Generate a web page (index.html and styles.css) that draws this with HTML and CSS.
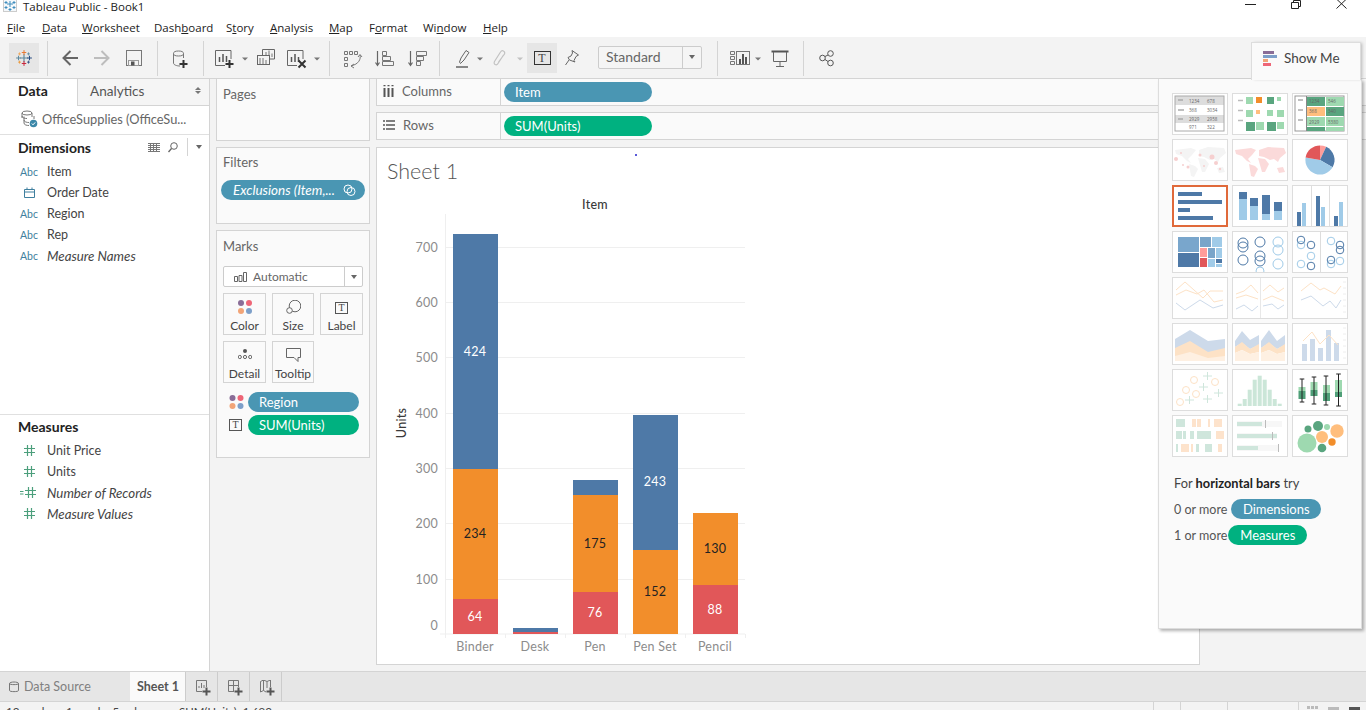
FILE: index.html
```html
<!DOCTYPE html>
<html lang="en">
<head>
<meta charset="utf-8">
<title>Tableau Public - Book1</title>
<link rel="stylesheet" href="styles.css">
</head>
<body>
<svg class="defs" width="0" height="0" aria-hidden="true">
  <defs>
    <g id="world">
      <path d="M3 11 L19 9 L24 11 L20 16 L16 20 L19 24 L15 22 L10 17 L4 15Z"/>
      <path d="M17 25 L23 27 L26 30 L22 38 L19 37Z"/>
      <path d="M27 11 L36 8 L52 9 L54 14 L48 19 L46 23 L42 20 L38 21 L32 18 L27 17Z"/>
      <path d="M26 19 L33 20 L37 25 L33 33 L30 33 L28 26Z"/>
      <path d="M45 29 L51 28 L53 33 L47 34Z"/>
    </g>
    <g id="hash">
      <path d="M4.5 0V11M8.5 0V11M1 3.5H12M1 7.5H12" fill="none" stroke="#4c9f7c" stroke-width="1.2"/>
    </g>
    <g id="dots">
      <circle cx="3" cy="3" r="3" fill="#8a6d97"/><circle cx="11" cy="3" r="3" fill="#ee6677"/>
      <circle cx="3" cy="11" r="3" fill="#f2a477"/><circle cx="11" cy="11" r="3" fill="#7d9fc9"/>
    </g>
  </defs>
</svg>

<header class="titlebar">
  <svg class="app-icon" width="14" height="12" viewBox="0 0 14 12">
    <rect x="0.5" y="-2" width="13" height="13.500" fill="#f4f8fb" stroke="#ccc"/>
    <path d="M7 1V7M4 4H10M3 1V4M1.500 2.500H4.500M11 1V4M9.500 2.500H12.500M3 6V9M1.500 7.500H4.500M11 6V9M9.500 7.500H12.500M7 8V11M5.500 9.500H8.500" stroke="#3f8dbd" stroke-width="1"/>
  </svg>
  <span class="app-title">Tableau Public - Book1</span>
  <div class="winctl">
    <svg width="11" height="8" viewBox="0 0 11 8"><path d="M0 4.500H11" stroke="#222"/></svg>
    <svg width="10" height="9" viewBox="0 0 10 9"><path d="M.5 2.500H7.500V8.500H.5ZM2.500 2.500V.5H9.500V6.500H7.500" fill="none" stroke="#222"/></svg>
    <svg width="11" height="9" viewBox="0 0 11 9"><path d="M.5 -1L10.500 8.500M10.500 -1L.5 8.500" stroke="#222"/></svg>
  </div>
</header>

<nav class="menubar">
  <span class="m-file"><u>F</u>ile</span>
  <span class="m-data"><u>D</u>ata</span>
  <span class="m-work"><u>W</u>orksheet</span>
  <span class="m-dash">Dash<u>b</u>oard</span>
  <span class="m-story">S<u>t</u>ory</span>
  <span class="m-anal"><u>A</u>nalysis</span>
  <span class="m-map"><u>M</u>ap</span>
  <span class="m-form">F<u>o</u>rmat</span>
  <span class="m-win">Wi<u>n</u>dow</span>
  <span class="m-help"><u>H</u>elp</span>
</nav>

<div class="toolbar">
  <div class="tg g0">
    <div class="tool-on">
      <svg width="18" height="18" viewBox="0 0 24 24" fill="none">
        <path d="M12 7V17M7 12H17" stroke="#5b879b" stroke-width="1.500"/>
        <path d="M12 1.500V8M9 4.700H15" stroke="#e8762d" stroke-width="1.300"/>
        <path d="M12 16V22.500M9 19.300H15" stroke="#c72035" stroke-width="1.300"/>
        <path d="M1.500 12H8M4.700 9V15" stroke="#5b879b" stroke-width="1.300"/>
        <path d="M16 12H22.500M19.300 9V15" stroke="#1f457e" stroke-width="1.300"/>
        <path d="M6 4.500V8.500M4 6.500H8" stroke="#f2a04c" stroke-width="1"/>
        <path d="M18 4.500V8.500M16 6.500H20" stroke="#59879b" stroke-width="1"/>
        <path d="M6 15.500V19.500M4 17.500H8" stroke="#eb9129" stroke-width="1"/>
        <path d="M18 15.500V19.500M16 17.500H20" stroke="#1f457e" stroke-width="1"/>
      </svg>
    </div>
  </div>
  <i class="sep"></i>
  <div class="tg g1">
    <svg width="16" height="24" viewBox="0 0 16 24" fill="none"><path d="M16 12H1.500M8.500 5L1.500 12L8.500 19" stroke="#666" stroke-width="2"/></svg>
    <svg width="16" height="24" viewBox="0 0 16 24" fill="none"><path d="M0 12H14.500M7.500 5L14.500 12L7.500 19" stroke="#bdbdbd" stroke-width="2"/></svg>
    <svg width="16" height="24" viewBox="0 0 16 24" fill="none"><rect x=".5" y="4.500" width="15" height="15" stroke="#777"/><rect x="2.500" y="14.500" width="10" height="5" stroke="#999"/><rect x="5" y="15.500" width="3.500" height="4" fill="#555"/></svg>
  </div>
  <i class="sep"></i>
  <div class="tg g2">
    <svg width="18" height="24" viewBox="0 0 18 24" fill="none"><path d="M2.500 7.500V17C2.500 19 6 20 9 20M12.500 7.500V12" stroke="#777"/><ellipse cx="7.500" cy="7.500" rx="5" ry="2.500" stroke="#777"/><path d="M12.500 14V22M8.500 18H16.500" stroke="#333" stroke-width="2"/></svg>
  </div>
  <i class="sep"></i>
  <div class="tg g3">
    <svg width="33" height="24" viewBox="0 0 33 24" fill="none"><path d="M10 19.500H.5V4.500H16V13" stroke="#666"/><path d="M4.500 16V11M8 16V8M11.500 16V10" stroke="#555" stroke-width="1.500"/><path d="M14.500 14V22M10.500 18H18.500" stroke="#333" stroke-width="2"/><path d="M27 11.500H33L30 14.500Z" fill="#777"/></svg>
    <svg width="21" height="24" viewBox="0 0 21 24" fill="none"><path d="M5.500 9V3.500H17.500V13H12.500" stroke="#666"/><rect x=".5" y="9.500" width="12" height="9" fill="#f3f3f3" stroke="#666"/><path d="M9 6V9M12 4.500V9M15 7.500V11M3 12V18M6 12V18M9 14V18" stroke="#777"/></svg>
    <svg width="33" height="24" viewBox="0 0 33 24" fill="none"><path d="M10 19.500H.5V4.500H16V13" stroke="#666"/><path d="M4.500 16V11M8 16V8M11.500 16V11" stroke="#555" stroke-width="1.500"/><path d="M11.500 14.500L18.500 21.500M18.500 14.500L11.500 21.500" stroke="#333" stroke-width="2"/><path d="M27 11.500H33L30 14.500Z" fill="#777"/></svg>
  </div>
  <i class="sep"></i>
  <div class="tg g4">
    <svg width="20" height="24" viewBox="0 0 20 24" fill="none"><path d="M1.500 5.500h3v3h-3zM6.500 5.500h3v3h-3zM11.500 5.500h3v3h-3zM1.500 11.500h3v3h-3zM1.500 17.500h3v3h-3z" stroke="#777"/><path d="M17 9C18 13 16 18 8 20M8 20L11 18M8 20L11 22M15 11L17 8.500L19 11" stroke="#777"/></svg>
    <svg width="20" height="24" viewBox="0 0 20 24" fill="none"><path d="M2.500 5V19M.5 16.500L2.500 19.500L4.500 16.500" stroke="#666" stroke-width="1.200"/><path d="M7.500 5.500h4v4h-4zM7.500 10.500h8v4h-8zM7.500 15.500h11v4h-11z" stroke="#777"/></svg>
    <svg width="20" height="24" viewBox="0 0 20 24" fill="none"><path d="M3.500 5V19M1.500 16.500L3.500 19.500L5.500 16.500" stroke="#666" stroke-width="1.200"/><path d="M9.500 5.500h10v4h-10zM9.500 10.500h7v4h-7zM9.500 15.500h4v4h-4z" stroke="#777"/></svg>
  </div>
  <i class="sep"></i>
  <div class="tg g5">
    <svg width="37" height="24" viewBox="0 0 37 24" fill="none"><path d="M3.500 16L5 12L10 4.500L13 6.500L8 14L4.500 17.500Z" stroke="#666"/><rect x="0" y="20" width="12" height="2" fill="#888"/><path d="M21 11.500H27L24 14.500Z" fill="#777"/></svg>
    <svg width="34" height="24" viewBox="0 0 34 24" fill="none"><path d="M10.500 9L5 17.500C3.500 20 0 18.500 1.500 15.500L7.500 6C9 3.500 12.500 5 11.500 8L5.500 16" stroke="#c2c2c2" stroke-width="1.200"/><path d="M24 11.500H30L27 14.500Z" fill="#c2c2c2"/></svg>
    <div class="tool-on"><span class="t-box t-lg">T</span></div>
    <svg width="41" height="24" viewBox="0 0 41 24" fill="none"><path d="M15 4.500L21.500 9L19 10.500L17 14.500L18 16L12.500 14L11 11.500L14 10L15.500 7ZM12 14L8.500 19" stroke="#666"/></svg>
    <div class="std"><span class="std-text">Standard</span><span class="std-btn"><i class="caret"></i></span></div>
  </div>
  <i class="sep"></i>
  <div class="tg g6">
    <svg width="41" height="24" viewBox="0 0 41 24" fill="none"><path d="M.5 5.500h4v3h-4zM.5 10.500h4v3h-4zM.5 15.500h4v3h-4z" stroke="#777"/><rect x="6.500" y="5.500" width="13" height="13" stroke="#777"/><path d="M10 18V13M13 18V8M16 18V11" stroke="#555" stroke-width="2"/><path d="M25 11.500H31L28 14.500Z" fill="#777"/></svg>
    <svg width="20" height="24" viewBox="0 0 20 24" fill="none"><path d="M.5 5.500H17.500" stroke="#555" stroke-width="2"/><path d="M2.500 6V15.500H15.500V6M9 16V20M5 20.500H13" stroke="#666"/></svg>
  </div>
  <i class="sep"></i>
  <div class="tg g7">
    <svg width="16" height="24" viewBox="0 0 16 24" fill="none"><circle cx="11.500" cy="7.500" r="2.800" stroke="#555"/><circle cx="3.500" cy="12" r="2.800" stroke="#555"/><circle cx="11.500" cy="17" r="2.800" stroke="#555"/><path d="M6 10.500L9 9M6 13.500L9 15.500" stroke="#555"/></svg>
  </div>
</div>

<main class="main">
  <aside class="datapane">
    <div class="tabs">
      <div class="tab-data">Data</div>
      <div class="tab-analytics"><span>Analytics</span><span class="updown"><i></i><i></i></span></div>
    </div>
    <div class="conn">
      <svg width="18" height="18" viewBox="0 0 18 18" fill="none"><ellipse cx="7" cy="3" rx="5" ry="2" stroke="#777"/><path d="M2 3V8M12 3V7M2 6C2 8 5 8.500 7 8.500M4 6.500V13C4 15 7 15.500 9 15.500M4 10C4 12 7 12.500 9 12.500M14 6V9" stroke="#777"/><circle cx="13.500" cy="13.500" r="3.800" fill="#3c87a8"/><path d="M11.800 13.500L13 14.800L15.200 12.400" stroke="#fff"/></svg>
      <span>OfficeSupplies (OfficeSu...</span>
    </div>
    <div class="dims">
      <div class="sec-head">
        <span class="sec-title">Dimensions</span>
        <span class="sec-tools">
          <svg width="12" height="9" viewBox="0 0 12 9"><path d="M0 .5H12M0 2.500H12M0 4.500H12M0 6.500H12M0 8.500H12M2.500 0V9M5.500 0V9M8.500 0V9" stroke="#777" stroke-width="1"/></svg>
          <svg width="10" height="11" viewBox="0 0 10 11" fill="none"><circle cx="6" cy="4" r="3.300" stroke="#666"/><path d="M3.500 6.500L.5 10" stroke="#666" stroke-width="1.300"/></svg>
          <i class="vline"></i>
          <i class="caret"></i>
        </span>
      </div>
      <ul class="fields">
        <li><span class="abc">Abc</span>Item</li>
        <li><span class="fi"><svg width="11" height="11" viewBox="0 0 11 11" fill="none"><path d="M.5 2.500H10.500V10.500H.5ZM.5 5H10.500M3 .5V2.500M8 .5V2.500" stroke="#3f7f9e"/></svg></span>Order Date</li>
        <li><span class="abc">Abc</span>Region</li>
        <li><span class="abc">Abc</span>Rep</li>
        <li class="calc"><span class="abc">Abc</span>Measure Names</li>
      </ul>
    </div>
    <div class="meas">
      <div class="sec-head"><span class="sec-title">Measures</span></div>
      <ul class="fields">
        <li><span class="fi"><svg width="13" height="11" viewBox="0 0 13 11"><use href="#hash"/></svg></span>Unit Price</li>
        <li><span class="fi"><svg width="13" height="11" viewBox="0 0 13 11"><use href="#hash"/></svg></span>Units</li>
        <li class="calc"><span class="fi fi-eq"><svg width="17" height="11" viewBox="-4 0 17 11"><path d="M-4 4.500H-.5M-4 7H-.5" stroke="#4c9f7c"/><use href="#hash"/></svg></span>Number of Records</li>
        <li class="calc"><span class="fi"><svg width="13" height="11" viewBox="0 0 13 11"><use href="#hash"/></svg></span>Measure Values</li>
      </ul>
    </div>
  </aside>

  <section class="cards">
    <div class="card card-pages"><h3>Pages</h3></div>
    <div class="card card-filters">
      <h3>Filters</h3>
      <div class="pill pill-blue pill-filter"><em>Exclusions (Item,...</em>
        <svg width="13" height="12" viewBox="0 0 13 12" fill="none"><circle cx="5" cy="5" r="4" stroke="#fff"/><circle cx="8" cy="7.500" r="4" stroke="#fff"/></svg>
      </div>
    </div>
    <div class="card card-marks">
      <h3>Marks</h3>
      <div class="marktype">
        <svg width="13" height="10" viewBox="0 0 13 10" fill="none"><path d="M.5 4.500h3v5h-3zM5 3.500h3v6h-3zM9.500 .5h3v9h-3z" stroke="#666"/></svg>
        <span class="mt-name">Automatic</span>
        <span class="mt-btn"><i class="caret"></i></span>
      </div>
      <div class="markgrid">
        <div class="mbtn"><svg width="14" height="14" viewBox="0 0 14 14"><use href="#dots"/></svg><span>Color</span></div>
        <div class="mbtn"><svg width="15" height="14" viewBox="0 0 15 14" fill="none"><circle cx="9" cy="6" r="5.800" stroke="#666"/><circle cx="3.500" cy="10.500" r="2.800" fill="#fafafa" stroke="#666"/></svg><span>Size</span></div>
        <div class="mbtn"><span class="t-box">T</span><span>Label</span></div>
        <div class="mbtn"><svg width="14" height="14" viewBox="0 0 14 14" fill="none"><circle cx="7" cy="3" r="2" fill="#555"/><circle cx="1.800" cy="9" r="1.600" stroke="#666"/><circle cx="7" cy="9" r="1.600" stroke="#666"/><circle cx="12.200" cy="9" r="1.600" stroke="#666"/></svg><span>Detail</span></div>
        <div class="mbtn"><svg width="15" height="14" viewBox="0 0 15 14" fill="none"><path d="M.5 .5H14.500V9.500H12V13.500L8 9.500H.5Z" stroke="#666"/></svg><span>Tooltip</span></div>
      </div>
      <div class="encs">
        <svg width="15" height="14" viewBox="0 0 14 14"><use href="#dots"/></svg>
        <div class="pill pill-blue pill-enc">Region</div>
        <span class="t-box">T</span>
        <div class="pill pill-green pill-enc">SUM(Units)</div>
      </div>
    </div>
  </section>

  <section class="work">
    <div class="shelf shelf-cols">
      <div class="shelf-label">
        <svg width="11" height="12" viewBox="0 0 11 12"><path d="M1.500 3V12M5.500 3V12M9.500 3V12" stroke="#555" stroke-width="2"/><path d="M.5 .5H2.500M4.500 .5H6.500M8.500 .5H10.500" stroke="#555" stroke-width="1.500"/></svg>
        <span>Columns</span>
      </div>
      <div class="pill pill-blue pill-shelf">Item</div>
    </div>
    <div class="shelf shelf-rows">
      <div class="shelf-label">
        <svg width="12" height="10" viewBox="0 0 12 10"><path d="M3 1H12M3 5H12M3 9H12" stroke="#555" stroke-width="1.500"/><path d="M0 1H2M0 5H2M0 9H2" stroke="#555" stroke-width="1.500"/></svg>
        <span>Rows</span>
      </div>
      <div class="pill pill-green pill-shelf">SUM(Units)</div>
    </div>
    <div class="sheet">
      <i class="blue-dot"></i>
      <h1 class="sheet-title">Sheet 1</h1>
      <svg class="chart" width="822" height="474" viewBox="377 190 822 474">
        <g class="grid">
          <path d="M445.500 214V638M440 634H745"/>
          <path d="M445 247.500H745M445 302.500H745M445 357.500H745M445 413.500H745M445 468.500H745M445 523.500H745M445 579.500H745"/>
          <path d="M505.500 634V638M565.500 634V638M625.500 634V638M685.500 634V638M745.500 634V638"/>
        </g>
        <rect class="b" x="453" y="234" width="45" height="235"/>
        <rect class="o" x="453" y="469" width="45" height="130"/>
        <rect class="r" x="453" y="599" width="45" height="35"/>
        <rect class="b" x="513" y="628" width="45" height="4"/>
        <rect class="r" x="513" y="632" width="45" height="2"/>
        <rect class="b" x="573" y="480" width="45" height="15"/>
        <rect class="o" x="573" y="495" width="45" height="97"/>
        <rect class="r" x="573" y="592" width="45" height="42"/>
        <rect class="b" x="633" y="415" width="45" height="135"/>
        <rect class="o" x="633" y="550" width="45" height="84"/>
        <rect class="o" x="693" y="513" width="45" height="72"/>
        <rect class="r" x="693" y="585" width="45" height="49"/>
        <g class="lab-w">
          <text x="475" y="356">424</text><text x="475" y="621">64</text>
          <text x="595" y="617">76</text><text x="655" y="486">243</text><text x="715" y="614">88</text>
        </g>
        <g class="lab-k">
          <text x="475" y="538">234</text><text x="595" y="548">175</text>
          <text x="655" y="596">152</text><text x="715" y="553">130</text>
        </g>
        <g class="yax">
          <text x="438" y="252">700</text><text x="438" y="307">600</text><text x="438" y="362">500</text>
          <text x="438" y="418">400</text><text x="438" y="473">300</text><text x="438" y="528">200</text>
          <text x="438" y="584">100</text><text x="438" y="630">0</text>
        </g>
        <g class="xax">
          <text x="475" y="651">Binder</text><text x="535" y="651">Desk</text><text x="595" y="651">Pen</text>
          <text x="655" y="651">Pen Set</text><text x="715" y="651">Pencil</text>
        </g>
        <text class="ax-title" x="595" y="209">Item</text>
        <text class="ax-title" transform="translate(406 423) rotate(-90)">Units</text>
      </svg>
    </div>
  </section>
</main>

<footer class="tabbar">
  <div class="t-source">
    <svg width="10" height="12" viewBox="0 0 10 12" fill="none"><path d="M.5 2.500V9.500C.5 11 9.500 11 9.500 9.500V2.500C9.500 .5 .5 .5 .5 2.500ZM.5 2.500C.5 4 9.500 4 9.500 2.500" stroke="#777"/></svg>
    <span>Data Source</span>
  </div>
  <div class="t-sheet">Sheet 1</div>
  <div class="t-add">
    <svg width="15" height="16" viewBox="0 0 15 16" fill="none"><path d="M6 11.500H.5V.5H10.500V7" stroke="#777"/><path d="M3 8V6M5.500 8V3M8 8V5" stroke="#777"/><path d="M10.500 7.500V15.500M6.500 11.500H14.500" stroke="#555" stroke-width="2"/></svg>
  </div>
  <div class="t-add">
    <svg width="15" height="16" viewBox="0 0 15 16" fill="none"><path d="M6 11.500H.5V.5H10.500V7M.5 5.500H10.500M5.500 .5V11.500" stroke="#777"/><path d="M10.500 7.500V15.500M6.500 11.500H14.500" stroke="#555" stroke-width="2"/></svg>
  </div>
  <div class="t-add">
    <svg width="15" height="16" viewBox="0 0 15 16" fill="none"><path d="M6 12L3.500 10.500L.5 12V1.500L3.500 0L7 1.500L10.500 0V7M3.500 0V10.500M7 1.500V8" stroke="#777"/><path d="M10.500 7.500V15.500M6.500 11.500H14.500" stroke="#555" stroke-width="2"/></svg>
  </div>
</footer>
<div class="status">
  <span class="st st-marks">13 marks</span>
  <span class="st st-rows">1 row by 5 columns</span>
  <span class="st st-sum">SUM(Units): 1,693</span>
  <span class="st-right">
    <i class="st-cell c1"></i><i class="st-cell c2"></i><i class="st-cell c3"></i>
    <i class="st-cell c4"><b class="sq"></b><b class="sq"></b><b class="sq"></b></i>
    <b class="sv"></b><b class="sv sv-on"></b>
  </span>
</div>

<aside class="showme">
  <div class="sm-tab">
    <svg width="15" height="15" viewBox="0 0 15 15"><rect width="11" height="3" fill="#8a6d97"/><rect y="4" width="14" height="3" fill="#7d9fc9"/><rect y="8" width="5" height="3" fill="#f2a477"/><rect y="12" width="8" height="3" fill="#ee6677"/></svg>
    <span>Show Me</span>
  </div>
  <div class="sm-grid">
    <!-- text table -->
    <svg class="th" viewBox="1 1 54 40"><path d="M3 3H52V12H3ZM3 22H52V30H3Z" fill="#ddd"/><rect x="3" y="3" width="49" height="35" fill="none" stroke="#aaa"/><path d="M6 7H11M6 17H12M6 26H11" stroke="#aaa" stroke-width="1.500"/><g class="tiny"><text x="17" y="10">1234</text><text x="35" y="10">678</text><text x="17" y="19">368</text><text x="35" y="19">3034</text><text x="17" y="28">2929</text><text x="35" y="28">2958</text><text x="17" y="36">971</text><text x="35" y="36">322</text></g></svg>
    <!-- heat map -->
    <svg class="th" viewBox="1 1 54 40"><path d="M6 7.500H11M6 17.500H11M6 27.500H11" stroke="#bbb" stroke-width="1.500"/><rect x="14" y="4" width="7" height="7" fill="#9ed9b0"/><rect x="24" y="4" width="6" height="6" fill="#f28e2b"/><rect x="35" y="4" width="7" height="7" fill="#59a57f"/><rect x="45" y="4" width="4" height="4" fill="#9ed9b0"/><rect x="14" y="17" width="7" height="7" fill="#9ed9b0"/><rect x="24" y="17" width="4" height="4" fill="#ffbe7d"/><rect x="35" y="17" width="6" height="6" fill="#9ed9b0"/><rect x="45" y="17" width="7" height="7" fill="#9ed9b0"/><rect x="14" y="29" width="9" height="9" fill="#59a57f"/><rect x="24" y="29" width="8" height="8" fill="#9ed9b0"/><rect x="35" y="29" width="9" height="9" fill="#59a57f"/><rect x="45" y="29" width="7" height="7" fill="#9ed9b0"/></svg>
    <!-- highlight table -->
    <svg class="th" viewBox="1 1 54 40"><rect x="3" y="3" width="49" height="35" fill="#fff" stroke="#999"/><path d="M14.500 3V38" stroke="#888"/><path d="M6 7H11M6 17H11M6 27H11" stroke="#aaa" stroke-width="1.500"/><rect x="15" y="4" width="18" height="9" fill="#59a57f"/><rect x="34" y="4" width="18" height="9" fill="#9ed9b0"/><rect x="15" y="14" width="18" height="9" fill="#ffbe7d"/><rect x="34" y="14" width="18" height="9" fill="#59a57f"/><rect x="15" y="24" width="18" height="9" fill="#9ed9b0"/><rect x="34" y="24" width="18" height="9" fill="#9ed9b0"/><rect x="15" y="34" width="18" height="4" fill="#59a57f"/><rect x="34" y="34" width="18" height="4" fill="#9ed9b0"/><g class="tiny"><text x="17" y="10">1234</text><text x="36" y="10">546</text><text x="17" y="20">368</text><text x="36" y="20">340</text><text x="17" y="31">2929</text><text x="36" y="31">5380</text></g></svg>
    <!-- symbol map -->
    <svg class="th" viewBox="1 1 54 40"><use href="#world" fill="#f4f4f4"/><g fill="#f6cfcf"><circle cx="4" cy="20" r="2"/><circle cx="9" cy="14" r="1"/><circle cx="11" cy="26" r="1"/><circle cx="16" cy="28" r="1.500"/><circle cx="28" cy="16" r="1.500"/><circle cx="32" cy="27" r="1"/><circle cx="40" cy="18" r="2.500"/><circle cx="44" cy="24" r="2"/><circle cx="48" cy="30" r="1.200"/></g></svg>
    <!-- filled map -->
    <svg class="th" viewBox="1 1 54 40"><use href="#world" fill="#fbdada"/></svg>
    <!-- pie -->
    <svg class="th" viewBox="1 1 54 40"><path d="M28 21V6.400A14.600 14.600 0 0 1 34.200 7.800Z" fill="#ff9d9a"/><path d="M28 21L34.200 7.800A14.600 14.600 0 0 1 40.600 28.300Z" fill="#4e79a7"/><path d="M28 21L40.600 28.300A14.600 14.600 0 0 1 13.600 18.500Z" fill="#a0cbe8"/><path d="M28 21L13.600 18.500A14.600 14.600 0 0 1 28 6.400Z" fill="#e15759"/></svg>
    <!-- horizontal bars (selected) -->
    <svg class="th th-sel" viewBox="2 2 52 38"><g fill="#4e79a7"><rect x="6" y="7" width="24" height="4"/><rect x="6" y="15" width="44" height="4"/><rect x="6" y="23" width="12" height="4"/><rect x="6" y="31" width="35" height="4"/></g></svg>
    <!-- stacked bars -->
    <svg class="th" viewBox="1 1 54 40"><g fill="#a0cbe8"><rect x="7" y="14" width="8" height="21"/><rect x="18" y="21" width="8" height="14"/><rect x="30" y="29" width="8" height="6"/><rect x="42" y="26" width="8" height="9"/></g><g fill="#4e79a7"><rect x="7" y="7" width="8" height="7"/><rect x="18" y="13" width="8" height="8"/><rect x="30" y="10" width="8" height="19"/><rect x="42" y="17" width="8" height="9"/></g></svg>
    <!-- side by side -->
    <svg class="th" viewBox="1 1 54 40"><path d="M19.500 0V42M37.500 0V42" stroke="#ddd"/><g fill="#4e79a7"><rect x="5" y="27" width="4" height="14"/><rect x="24" y="11" width="4" height="30"/><rect x="42" y="31" width="4" height="10"/></g><g fill="#a0cbe8"><rect x="10" y="18" width="4" height="23"/><rect x="29" y="22" width="4" height="19"/><rect x="47" y="17" width="4" height="24"/></g></svg>
    <!-- treemap -->
    <svg class="th" viewBox="1 1 54 40"><rect x="6" y="6" width="21" height="15" fill="#79a6cc"/><rect x="6" y="22" width="21" height="14" fill="#4e79a7"/><rect x="28" y="6" width="11" height="10" fill="#7aa5c9"/><rect x="40" y="6" width="10" height="10" fill="#a0cbe8"/><rect x="28" y="17" width="7" height="9" fill="#ff9d9a"/><rect x="28" y="27" width="7" height="9" fill="#e15759"/><rect x="36" y="17" width="7" height="10" fill="#7aa5c9"/><rect x="44" y="17" width="6" height="10" fill="#a0cbe8"/><rect x="36" y="28" width="7" height="8" fill="#a0cbe8"/><rect x="44" y="28" width="6" height="4" fill="#4e79a7"/><rect x="44" y="33" width="6" height="3" fill="#a0cbe8"/></svg>
    <!-- circles -->
    <svg class="th" viewBox="1 1 54 40" fill="none" stroke-width="1"><g stroke="#4e79a7"><circle cx="11" cy="12" r="5"/><circle cx="11" cy="16" r="5"/><circle cx="28" cy="11" r="5"/><circle cx="11" cy="29" r="5"/><circle cx="28" cy="25" r="5"/><circle cx="28" cy="30" r="5"/></g><g stroke="#a0cbe8"><circle cx="46" cy="11" r="5"/><circle cx="46" cy="19" r="5"/><circle cx="46" cy="33" r="5"/><circle cx="28" cy="40" r="4"/></g></svg>
    <!-- side by side circles -->
    <svg class="th" viewBox="1 1 54 40" fill="none"><path d="M28.500 0V42" stroke="#ddd"/><g stroke="#a0cbe8"><circle cx="9" cy="14" r="3.800"/><circle cx="19" cy="25" r="3.800"/><circle cx="9" cy="33" r="3.800"/><circle cx="39" cy="10" r="3.800"/><circle cx="39" cy="33" r="3.800"/><circle cx="48" cy="30" r="3.800"/></g><g stroke="#4e79a7"><circle cx="9" cy="9" r="3.800"/><circle cx="19" cy="14" r="3.800"/><circle cx="19" cy="35" r="3.800"/><circle cx="48" cy="14" r="3.800"/><circle cx="48" cy="19" r="3.800"/><circle cx="39" cy="29" r="3.800"/></g></svg>
    <!-- lines -->
    <svg class="th" viewBox="1 1 54 40" fill="none"><polyline points="4,13 13,5 31,21 38,14 51,14" stroke="#fde2c6"/><polyline points="4,18 14,13 25,17 32,13 42,25 51,23" stroke="#fde2c6"/><polyline points="4,26 13,33 28,23 41,31 51,28" stroke="#cddaea"/></svg>
    <svg class="th" viewBox="1 1 54 40" fill="none"><path d="M28.500 0V42" stroke="#e8e8e8"/><polyline points="4,17 12,14 19,8 26,16" stroke="#fde2c6"/><polyline points="4,21 14,18 26,22" stroke="#fde2c6"/><polyline points="4,32 12,28 20,34 26,29" stroke="#cddaea"/><polyline points="31,14 38,8 46,15 52,11" stroke="#fde2c6"/><polyline points="31,23 40,19 52,24" stroke="#fde2c6"/><polyline points="31,29 40,27 46,32 52,28" stroke="#cddaea"/></svg>
    <svg class="th" viewBox="1 1 54 40" fill="none"><polyline points="9,14 19,6 28,13 32,11 43,17 49,9" stroke="#fde2c6"/><polyline points="9,23 19,19 31,29 38,24 44,31 49,23" stroke="#cddaea"/><path d="M51 5H54M51 11H54M51 17H54M51 23H54M51 29H54M51 35H54" stroke="#eee"/></svg>
    <!-- areas -->
    <svg class="th" viewBox="1 1 54 40"><path d="M3 16L18 7L36 18L53 16V26L36 30L18 19L3 26Z" fill="#cddaea"/><path d="M3 25L18 18L36 29L53 25V34L36 36L18 30L3 34Z" fill="#fde2c6"/><path d="M3 33L18 29L36 35L53 33V38H3Z" fill="#fef0e2"/></svg>
    <svg class="th" viewBox="1 1 54 40"><path d="M3 18L10 8L18 17L27 12V22L18 26L10 20L3 24Z" fill="#cddaea"/><path d="M29 18L37 7L45 18L53 12V22L45 26L37 20L29 25Z" fill="#cddaea"/><path d="M3 24L10 19L18 26L27 21V29L18 31L10 27L3 30Z" fill="#fde2c6"/><path d="M29 25L37 19L45 26L53 21V29L45 31L37 27L29 30Z" fill="#fde2c6"/><path d="M3 30L10 27L18 31L27 29V38H3Z" fill="#fef0e2"/><path d="M29 30L37 27L45 31L53 29V38H29Z" fill="#fef0e2"/></svg>
    <svg class="th" viewBox="1 1 54 40" fill="none"><g fill="#cddaea"><rect x="10" y="21" width="5" height="17"/><rect x="18" y="16" width="5" height="22"/><rect x="26" y="25" width="5" height="13"/><rect x="34" y="7" width="5" height="31"/><rect x="42" y="20" width="5" height="18"/></g><polyline points="11,18 20,9 28,21 37,12 46,22" stroke="#fde2c6"/><path d="M51 5H54M51 11H54M51 17H54M51 23H54M51 29H54M51 35H54" stroke="#eee"/></svg>
    <!-- scatter -->
    <svg class="th" viewBox="1 1 54 40" fill="none"><g stroke="#fde2c6"><circle cx="8" cy="33" r="3.500"/><circle cx="14" cy="21" r="3.500"/><circle cx="22" cy="11" r="3.500"/><circle cx="24" cy="25" r="3.500"/><circle cx="43" cy="13" r="3.500"/></g><path d="M13 31H22M17.500 27V35M27 18H36M31.500 14V22M31 7H40M35.500 3V11M31 30H40M35.500 26V34M42 24H51M46.500 20V28" stroke="#cfe6dc"/></svg>
    <!-- histogram -->
    <svg class="th" viewBox="1 1 54 40"><g fill="#cbe6d8"><rect x="5.700" y="34.700" width="4" height="2.300"/><rect x="10.700" y="30" width="4" height="7"/><rect x="15.700" y="20.700" width="4" height="16.300"/><rect x="20.700" y="10.700" width="4" height="26.300"/><rect x="25.700" y="6.700" width="4" height="30.300"/><rect x="30.700" y="10.700" width="4" height="26.300"/><rect x="35.700" y="20.700" width="4" height="16.300"/><rect x="40.700" y="30" width="4" height="7"/><rect x="45.700" y="34.700" width="4" height="2.300"/></g></svg>
    <!-- box plot -->
    <svg class="th" viewBox="1 1 54 40"><g fill="#9ed9b0"><rect x="6.500" y="18" width="7" height="4"/><rect x="18.500" y="13" width="7" height="8"/><rect x="31" y="16" width="7" height="8"/><rect x="43" y="11" width="7" height="12"/></g><g fill="#4f9f78"><rect x="6.500" y="22" width="7" height="8"/><rect x="18.500" y="21" width="7" height="6"/><rect x="31" y="24" width="7" height="8"/><rect x="43" y="23" width="7" height="5"/></g><path d="M10 10V33M7.700 10H12.300M7.700 33H12.300M22 8V35M19.700 8H24.300M19.700 35H24.300M34 7V36M31.700 7H36.300M31.700 36H36.300M46.500 5V37M44.200 5H48.800M44.200 37H48.800" stroke="#222" fill="none"/></svg>
    <!-- gantt -->
    <svg class="th" viewBox="1 1 54 40"><g fill="#cfe6dc"><rect x="4" y="4" width="9" height="8"/><rect x="4" y="16" width="6" height="8"/><rect x="11" y="16" width="3" height="8"/><rect x="18" y="16" width="4" height="8"/><rect x="25" y="16" width="14" height="8"/><rect x="4" y="29" width="2" height="8"/><rect x="24" y="29" width="3" height="8"/><rect x="33" y="29" width="7" height="8"/></g><g fill="#fde3cc"><rect x="20" y="4" width="4" height="8"/><rect x="25" y="4" width="4" height="8"/><rect x="36" y="4" width="2" height="8"/><rect x="42" y="4" width="8" height="8"/><rect x="44" y="16" width="8" height="8"/><rect x="9" y="29" width="8" height="8"/><rect x="19" y="29" width="2" height="8"/><rect x="46" y="29" width="4" height="8"/></g></svg>
    <!-- bullet -->
    <svg class="th" viewBox="1 1 54 40"><g fill="#f7f7f7"><rect x="5" y="6" width="45" height="6"/><rect x="5" y="18" width="40" height="6"/><rect x="5" y="30" width="42" height="6"/></g><g fill="#cfe6dc"><rect x="5" y="7" width="25" height="4"/><rect x="5" y="19" width="40" height="4"/><rect x="5" y="31" width="21" height="4"/></g><path d="M33.500 5V13M40.500 17V25M46.500 29V37" stroke="#bbb"/></svg>
    <!-- bubbles -->
    <svg class="th" viewBox="1 1 54 40"><circle cx="15" cy="28" r="9.500" fill="#9ed9b0"/><circle cx="30" cy="22" r="6" fill="#ffbe7d"/><circle cx="45" cy="16" r="6.700" fill="#ffbe7d"/><circle cx="40" cy="27" r="3.700" fill="#f28e2b"/><circle cx="30" cy="33" r="4.300" fill="#59a57f"/><circle cx="16" cy="14" r="3.500" fill="#59a57f"/><circle cx="26" cy="11" r="5" fill="#59a57f"/><circle cx="35" cy="12" r="3" fill="#9ed9b0"/></svg>
  </div>
  <p class="sm-for">For <b>horizontal bars</b> try</p>
  <div class="sm-req sm-r1"><span>0 or more</span><div class="pill pill-blue sm-dim">Dimensions</div></div>
  <div class="sm-req sm-r2"><span>1 or more</span><div class="pill pill-green sm-mea">Measures</div></div>
</aside>
</body>
</html>
```

FILE: styles.css
```css
* { box-sizing: border-box; }
html, body { margin: 0; padding: 0; }
body {
  width: 1366px; height: 710px; overflow: hidden; position: relative;
  display: flex; flex-direction: column; background: #fff;
  font-family: "Lato", "Open Sans", sans-serif; color: #444;
}
.defs { position: absolute; }
svg { display: block; flex: none; }
i, b.sq, b.sv { display: block; }
ul { list-style: none; margin: 0; padding: 0; }
h1, h3, p { margin: 0; font-weight: normal; }

/* window chrome */
.titlebar { height: 18px; flex: none; display: flex; align-items: flex-start; padding-left: 3px; font-family: "Open Sans", sans-serif; }
.app-title { font-size: 11.500px; line-height: 13px; margin-left: 6px; color: #222; }
.winctl { margin-left: auto; display: flex; gap: 35px; width: 121px; }
.menubar { height: 19px; flex: none; position: relative; display: flex; font-family: "Open Sans", sans-serif; font-size: 11.500px; line-height: 19px; color: #222; padding-left: 7px; }
.m-file { width: 35px; } .m-data { width: 40px; } .m-work { width: 72px; } .m-dash { width: 72px; }
.m-story { width: 44px; } .m-anal { width: 59px; } .m-map { width: 40px; } .m-form { width: 54px; } .m-win { width: 60px; }

/* toolbar */
.toolbar { height: 42px; flex: none; display: flex; align-items: flex-start; padding-top: 6px; background: #f3f3f3; border-bottom: 1px solid #d4d4d4; }
.tg { height: 30px; flex: none; display: flex; align-items: center; }
.sep { width: 1px; height: 35px; margin-top: -2px; background: #d4d4d4; flex: none; }
.g0 { width: 47px; padding-left: 9px; }
.g1 { width: 109px; padding-left: 14px; gap: 16px; }
.g2 { width: 45px; padding-left: 13px; }
.g3 { width: 125px; padding-left: 11px; gap: 9px; }
.g4 { width: 109px; padding-left: 13px; gap: 12px; }
.g5 { width: 277px; padding-left: 16px; }
.g6 { width: 85px; padding-left: 12px; }
.g7 { padding-left: 15px; }
.tool-on { width: 30px; height: 30px; background: #e6e6e6; display: flex; align-items: center; justify-content: center; flex: none; }
.t-box { display: flex; align-items: center; justify-content: center; width: 13px; height: 12px; border: 1px solid #555; font-family: "Liberation Serif", serif; font-size: 10px; line-height: 1; color: #444; background: transparent; flex: none; }
.t-lg { width: 17px; height: 14px; border-color: #333; font-size: 12px; }
.caret { width: 0; height: 0; border-left: 3.5px solid transparent; border-right: 3.5px solid transparent; border-top: 4px solid #666; }
.std { width: 104px; height: 23px; margin-top: -2px; border: 1px solid #ccc; border-radius: 2px; display: flex; align-items: center; background: #f5f5f5; }
.std-text { flex: 1; padding: 0 0 2px 7px; font-size: 14px; color: #666; }
.std-btn { width: 19px; height: 100%; border-left: 1px solid #ccc; display: flex; align-items: center; justify-content: center; }

/* main */
.main { height: 592px; flex: none; display: flex; background: #f3f3f3; }
.datapane { width: 210px; flex: none; background: #fff; border-right: 1px solid #d4d4d4; display: flex; flex-direction: column; }
.tabs { height: 27px; display: flex; flex: none; }
.tab-data { width: 77px; padding-left: 18px; font-size: 14px; line-height: 24px; font-weight: 700; color: #222; }
.tab-analytics { flex: 1; padding: 0 8px 3px 12px; background: #f5f5f5; border-left: 1px solid #d4d4d4; border-bottom: 1px solid #d4d4d4; display: flex; align-items: center; justify-content: space-between; font-size: 13.600px; color: #555; }
.updown { display: flex; flex-direction: column; gap: 1px; }
.updown i { width: 0; height: 0; border-left: 3px solid transparent; border-right: 3px solid transparent; }
.updown i:first-child { border-bottom: 3px solid #777; }
.updown i:last-child { border-top: 3px solid #777; }
.conn { height: 29px; flex: none; display: flex; align-items: center; gap: 4px; padding: 0 0 3px 20px; border-bottom: 1px solid #e0e0e0; font-size: 12.800px; color: #666; }
.dims { height: 280px; flex: none; border-bottom: 1px solid #e0e0e0; padding-top: 2px; }
.sec-head { height: 20px; display: flex; align-items: center; justify-content: space-between; padding: 0 7px 0 18px; }
.sec-title { font-size: 14px; font-weight: 700; color: #222; }
.sec-tools { display: flex; align-items: center; gap: 8px; }
.vline { width: 1px; height: 18px; background: #d4d4d4; margin-left: 1px; }
.fields { padding-top: 4px; }
.fields li { height: 21px; display: flex; align-items: center; font-size: 12.500px; color: #444; padding-left: 47px; position: relative; }
.fields .calc { font-style: italic; font-size: 13.300px; }
.abc, .fi { position: absolute; left: 21px; width: 16px; display: flex; justify-content: center; }
.abc { font-size: 10.500px; color: #3f7f9e; font-style: normal; left: 21px; }
.fi-eq { left: 19px; width: 18px; }
.meas { padding-top: 1px; }

/* cards */
.cards { width: 166px; flex: none; padding: 0 6px; display: flex; flex-direction: column; gap: 6px; }
.card { background: #fafafa; border: 1px solid #d4d4d4; width: 154px; padding: 0 4px; }
.card h3 { font-size: 13px; color: #666; padding: 7px 0 0 2px; line-height: 16px; }
.card-pages { height: 62px; border-top: 0; }
.card-filters { height: 77px; }
.card-filters h3 { padding-top: 6px; }
.card-marks { height: 228px; }
.pill { border-radius: 10px; height: 20px; line-height: 20px; color: #fff; font-size: 13px; padding-left: 11px; flex: none; }
.pill-blue { background: #4a96b3; }
.pill-green { background: #00b180; }
.pill-filter { margin-top: 10px; display: flex; align-items: center; justify-content: space-between; padding: 0 9px 0 12px; }
.pill-filter em { font-size: 13.500px; }
.marktype { margin: 12px 2px 0; height: 21px; border: 1px solid #ccc; background: #fff; display: flex; align-items: center; padding-left: 10px; border-radius: 2px; width: 140px; }
.mt-name { flex: 1; font-size: 12px; color: #666; padding-left: 6px; }
.mt-btn { width: 18px; height: 100%; border-left: 1px solid #ccc; display: flex; align-items: center; justify-content: center; }
.markgrid { margin: 6px 2px 0; display: grid; grid-template-columns: 43px 42px 43px; grid-auto-rows: 42px; gap: 6px; width: 140px; }
.mbtn { border: 1px solid #d4d4d4; display: flex; flex-direction: column; align-items: center; justify-content: flex-end; gap: 4px; font-size: 12px; color: #444; background: #fafafa; padding-bottom: 1px; line-height: 15px; }
.encs { margin: 9px 0 0 8px; display: grid; grid-template-columns: 15px 111px; column-gap: 4px; row-gap: 3px; align-items: center; }
.pill-enc { padding-left: 11px; }

/* workspace */
.work { flex: 1; display: flex; flex-direction: column; min-width: 0; }
.shelf { display: flex; align-items: center; background: #fafafa; border: 1px solid #d4d4d4; border-right: 0; flex: none; }
.shelf-cols { height: 27px; border-top: 0; }
.shelf-rows { height: 28px; margin-top: 6px; }
.shelf-label { width: 124px; height: 100%; border-right: 1px solid #d4d4d4; display: flex; align-items: center; padding: 0 0 2px 6px; gap: 8px; font-size: 13px; color: #666; }
.pill-shelf { width: 148px; margin-left: 3px; }
.sheet { width: 824px; height: 518px; margin-top: 7px; background: #fff; border: 1px solid #d4d4d4; position: relative; flex: none; }
.blue-dot { position: absolute; left: 258px; top: 6px; width: 2px; height: 2px; background: #2222cc; border-radius: 50%; }
.sheet-title { height: 42px; padding: 10px 0 0 10px; font-size: 21.500px; line-height: 27px; font-weight: 300; color: #555; }

/* chart */
.grid path { stroke: #efefef; fill: none; }
.b { fill: #4e79a7; } .o { fill: #f28e2b; } .r { fill: #e15759; }
.chart text { font-family: "Lato", sans-serif; font-size: 12.500px; text-anchor: middle; letter-spacing: .25px; }
.lab-w text { fill: #fff; } .lab-k text { fill: #222; }
.chart .yax text { fill: #8c8c8c; text-anchor: end; }
.xax text { fill: #8c8c8c; }
.chart .ax-title { fill: #3a3a3a; font-size: 12.500px; font-weight: 500; }

/* bottom */
.tabbar { height: 31px; flex: none; display: flex; background: #e6e6e6; border-top: 1px solid #d4d4d4; border-bottom: 1px solid #d4d4d4; }
.t-source { width: 130px; display: flex; align-items: center; gap: 5px; padding-left: 9px; font-size: 12.500px; color: #808080; }
.t-sheet { width: 56px; padding-left: 1px; background: #fafafa; text-align: center; font-size: 12.500px; font-weight: 700; color: #555; line-height: 29px; border-right: 1px solid #ccc; }
.t-add { width: 32px; border-right: 1px solid #ccc; padding: 8px 0 0 10px; }
.status { height: 9px; flex: none; background: #f3f3f3; overflow: hidden; position: relative; display: flex; font-size: 11.500px; line-height: 14px; color: #444; padding: 3px 0 0 0; }
.st { flex: none; }
.st-marks { width: 66px; padding-left: 6px; }
.st-rows { width: 113px; }
.st-right { position: absolute; left: 1153px; top: 0; width: 213px; height: 9px; display: flex; }
.st-cell { height: 9px; border-left: 1px solid #d4d4d4; flex: none; }
.c1 { width: 27px; } .c2 { width: 47px; } .c3 { width: 71px; }
.c4 { width: 30px; display: flex; gap: 1px; padding: 4px 0 0 8px; }
.sq { width: 3px; height: 3px; background: #bbb; }
.sv { width: 11px; height: 5px; margin-top: 5px; background: #bbb; flex: none; }
.sv-on { background: #555; margin-left: 10px; }

/* show me */
.showme { position: absolute; left: 1158px; top: 79px; width: 204px; height: 550px; background: #fafafa; border: 1px solid #ddd; border-top: 0; box-shadow: 2px 2px 3px rgba(0,0,0,.3); padding: 14px 0 0 13px; }
.sm-tab { position: absolute; left: 92px; top: -37px; width: 110px; height: 38px; background: #fafafa; border: 1px solid #ddd; border-bottom: 0; display: flex; align-items: flex-start; gap: 6px; padding: 8px 0 0 11px; font-size: 13.500px; color: #444; box-shadow: 2px 0 3px -1px rgba(0,0,0,.25); }
.sm-tab span { line-height: 14px; }
.sm-grid { display: grid; grid-template-columns: repeat(3, 56px); grid-auto-rows: 42px; gap: 4px; }
.th { width: 56px; height: 42px; background: #fff; border: 1px solid #ddd; }
.th-sel { border: 2px solid #e0693a; }
.tiny text { font-family: "Open Sans", sans-serif; font-size: 4.500px; fill: #666; }
.sm-for { margin: 18px 0 0 2px; font-size: 12.800px; line-height: 16px; color: #444; }
.sm-for b { color: #222; }
.sm-req { display: flex; align-items: center; font-size: 12.500px; color: #555; padding-left: 2px; height: 20px; }
.sm-r1 { margin-top: 8px; gap: 4px; }
.sm-r2 { margin-top: 6px; gap: 1px; }
.sm-dim { width: 90px; text-align: center; padding: 0; }
.sm-mea { width: 79px; text-align: center; padding: 0; }
```
